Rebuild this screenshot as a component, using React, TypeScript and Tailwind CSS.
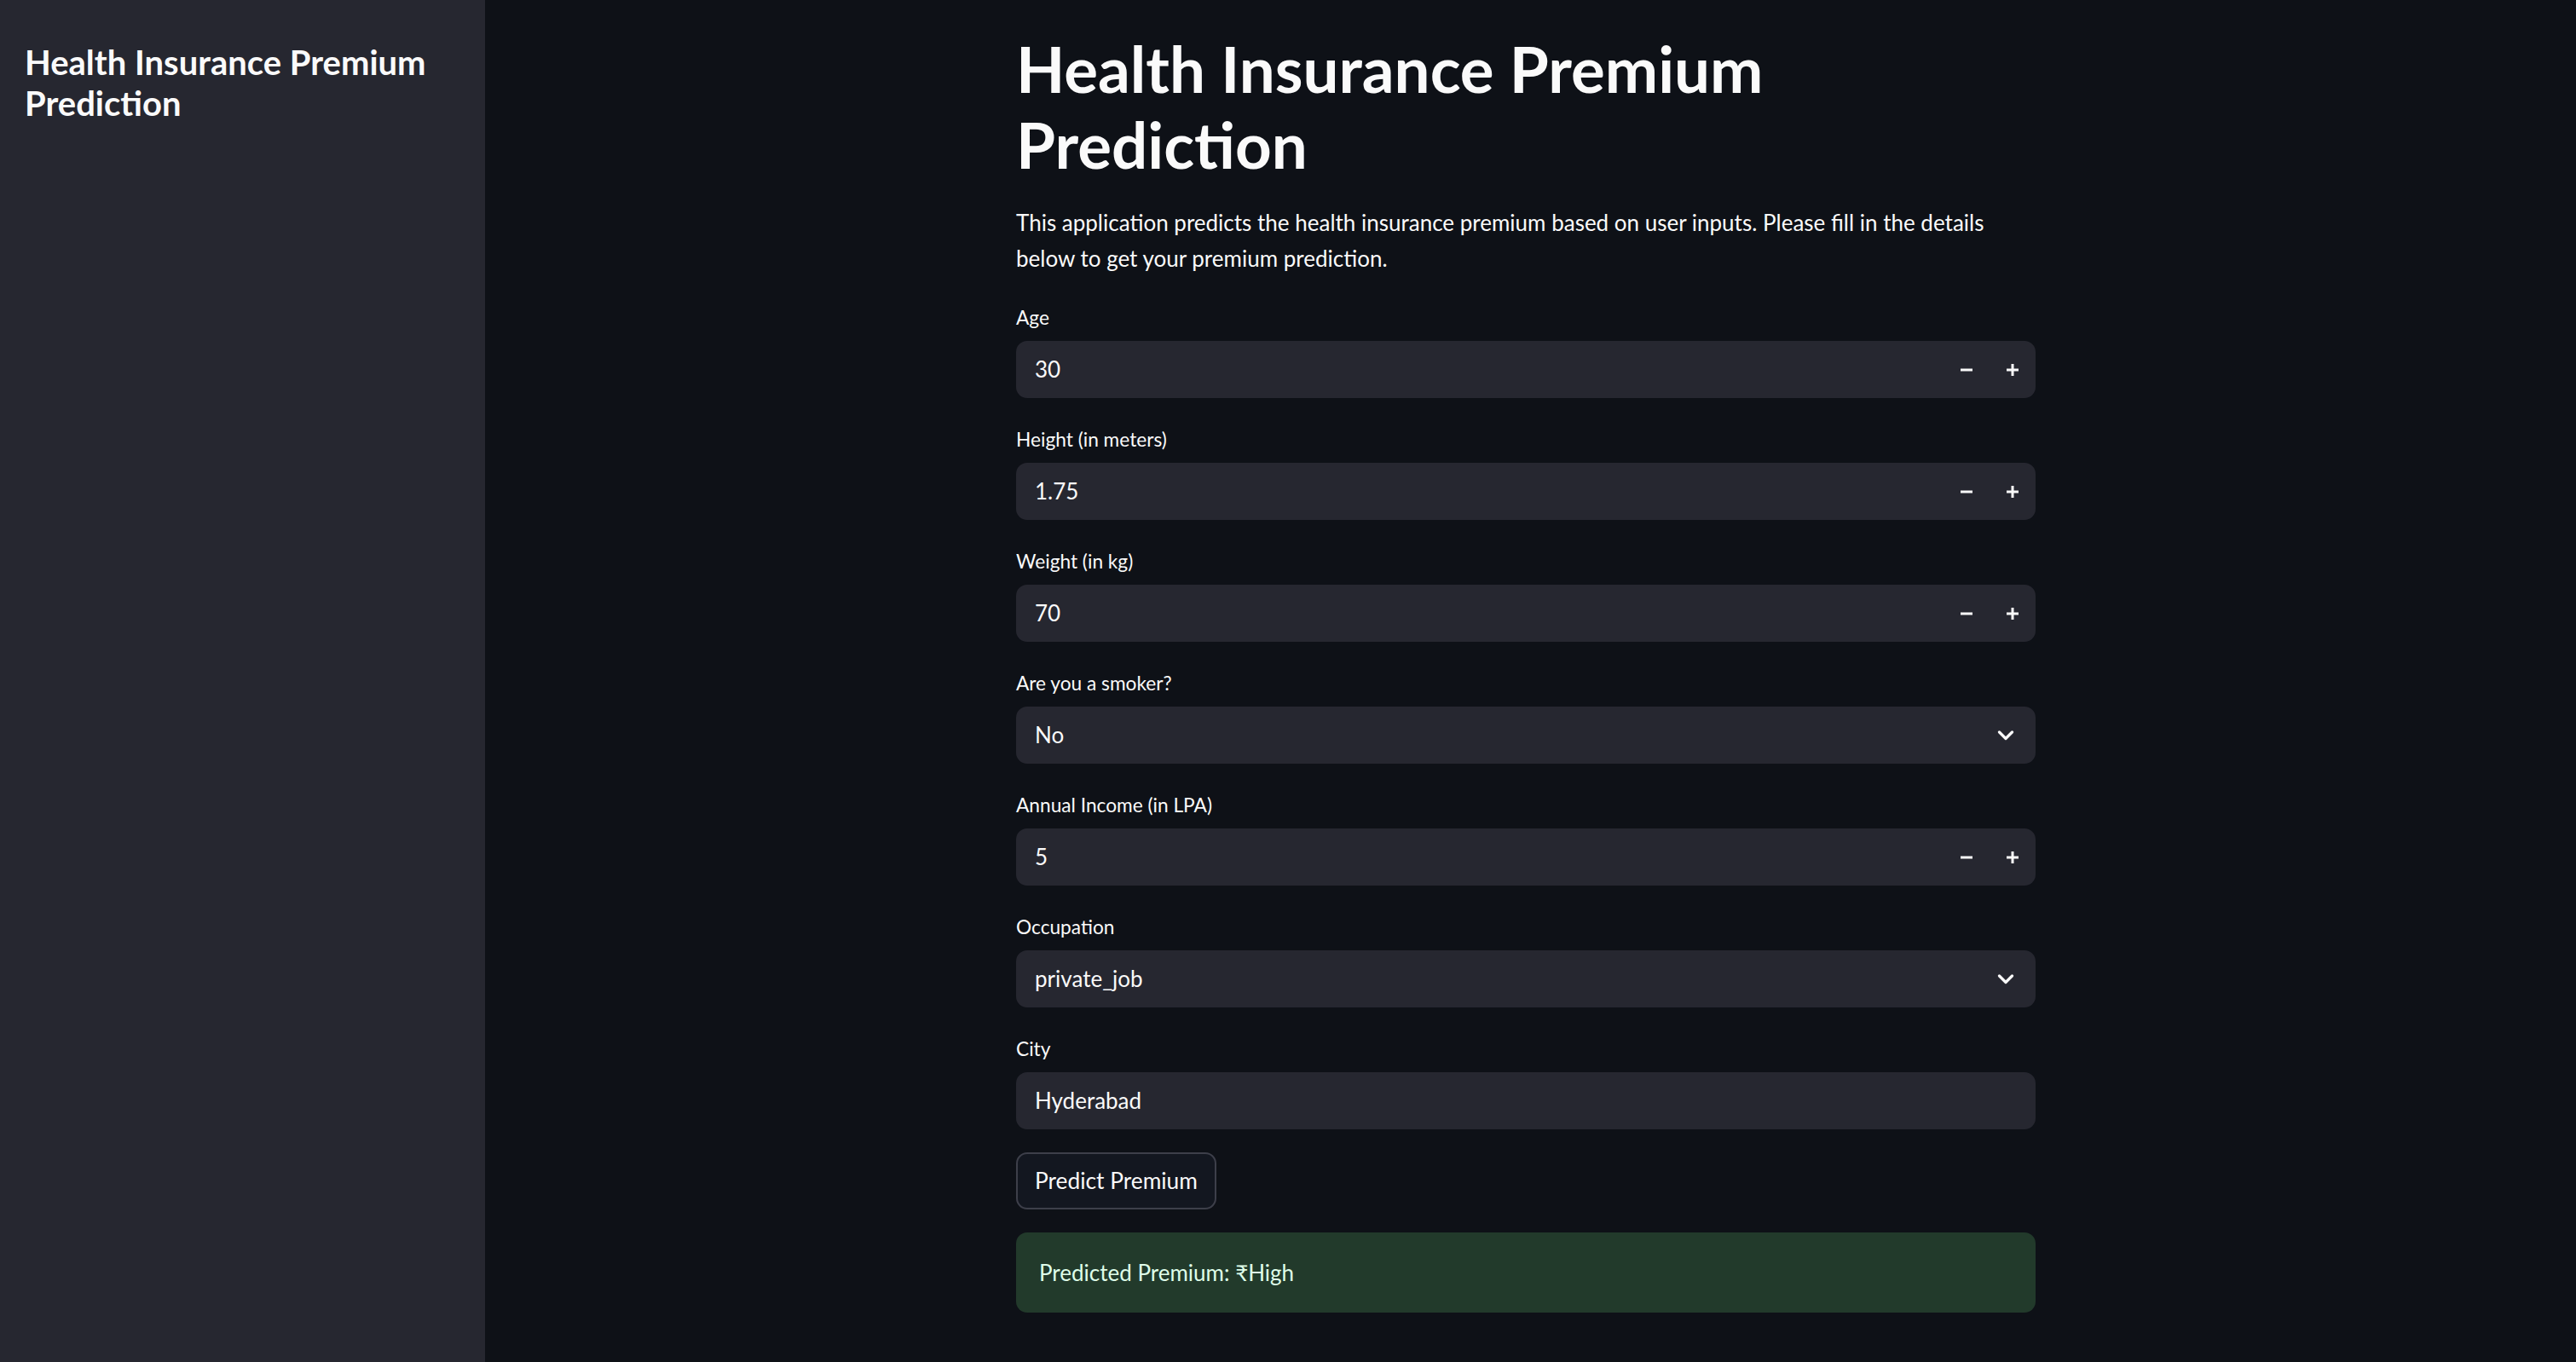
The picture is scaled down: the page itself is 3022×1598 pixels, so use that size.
import React from "react";

function MinusIcon() {
  return (
    <svg width="16" height="16" viewBox="0 0 16 16" fill="none">
      <rect x="1" y="6.5" width="14" height="3" fill="#fafafa" />
    </svg>
  );
}

function PlusIcon() {
  return (
    <svg width="16" height="16" viewBox="0 0 16 16" fill="none">
      <rect x="1" y="6.5" width="14" height="3" fill="#fafafa" />
      <rect x="6.5" y="1" width="3" height="14" fill="#fafafa" />
    </svg>
  );
}

function Chevron() {
  return (
    <svg width="20" height="12" viewBox="0 0 20 12" fill="none">
      <polyline points="2.5,2 10,9.5 17.5,2" stroke="#fafafa" strokeWidth="3.2" strokeLinecap="round" strokeLinejoin="round" fill="none" />
    </svg>
  );
}

function Label({ text }: { text: string }) {
  return <div className="text-[22.7px] leading-[32px] text-[#fafafa] mb-[11px]">{text}</div>;
}

function NumberField({ label, value }: { label: string; value: string }) {
  return (
    <div className="flex flex-col">
      <Label text={label} />
      <div className="h-[67px] rounded-[13px] bg-[#262730] flex items-center">
        <div className="flex-1 pl-[22px] text-[26px] text-[#fafafa]">{value}</div>
        <div className="w-[54px] h-full flex items-center justify-center">
          <MinusIcon />
        </div>
        <div className="w-[54px] h-full flex items-center justify-center">
          <PlusIcon />
        </div>
      </div>
    </div>
  );
}

function SelectField({ label, value }: { label: string; value: string }) {
  return (
    <div className="flex flex-col">
      <Label text={label} />
      <div className="h-[67px] rounded-[13px] bg-[#262730] flex items-center">
        <div className="flex-1 pl-[22px] text-[26px] text-[#fafafa]">{value}</div>
        <div className="pr-[25px] flex items-center">
          <Chevron />
        </div>
      </div>
    </div>
  );
}

function TextField({ label, value }: { label: string; value: string }) {
  return (
    <div className="flex flex-col">
      <Label text={label} />
      <div className="h-[67px] rounded-[13px] bg-[#262730] flex items-center">
        <div className="flex-1 pl-[22px] text-[26px] text-[#fafafa]">{value}</div>
      </div>
    </div>
  );
}

export default function App() {
  return (
    <div className="flex min-h-screen w-full bg-[#0e1117] text-[#fafafa] font-['Lato','Noto_Sans',sans-serif]">
      <aside className="w-[569px] shrink-0 bg-[#262730] px-[29px] pt-[49px]">
        <h1 className="text-[40px] leading-[48px] font-bold">Health Insurance Premium Prediction</h1>
      </aside>
      <main className="flex-1">
        <div className="ml-[623px] w-[1196px] pt-[36px] flex flex-col">
          <h1 className="text-[74.5px] leading-[89px] font-bold mb-[26px] pr-[200px]">Health Insurance Premium Prediction</h1>
          <p className="text-[26px] leading-[42px] mb-[33px]">
            This application predicts the health insurance premium based on user inputs. Please fill in the details
            <br />
            below to get your premium prediction.
          </p>
          <div className="flex flex-col gap-[33px]">
            <NumberField label="Age" value="30" />
            <NumberField label="Height (in meters)" value="1.75" />
            <NumberField label="Weight (in kg)" value="70" />
            <SelectField label="Are you a smoker?" value="No" />
            <NumberField label="Annual Income (in LPA)" value="5" />
            <SelectField label="Occupation" value="private_job" />
            <TextField label="City" value="Hyderabad" />
          </div>
          <div className="mt-[27px] flex">
            <button className="h-[67px] rounded-[13px] border-2 border-[#3d3f4a] bg-[#131720] text-[26.3px] text-[#fafafa] px-[20px]">
              Predict Premium
            </button>
          </div>
          <div className="mt-[27px] h-[94px] rounded-[13px] bg-[#223a2b] flex items-center pl-[27px] text-[26px] text-[#dffde9]">
            Predicted Premium: ₹High
          </div>
        </div>
      </main>
    </div>
  );
}
